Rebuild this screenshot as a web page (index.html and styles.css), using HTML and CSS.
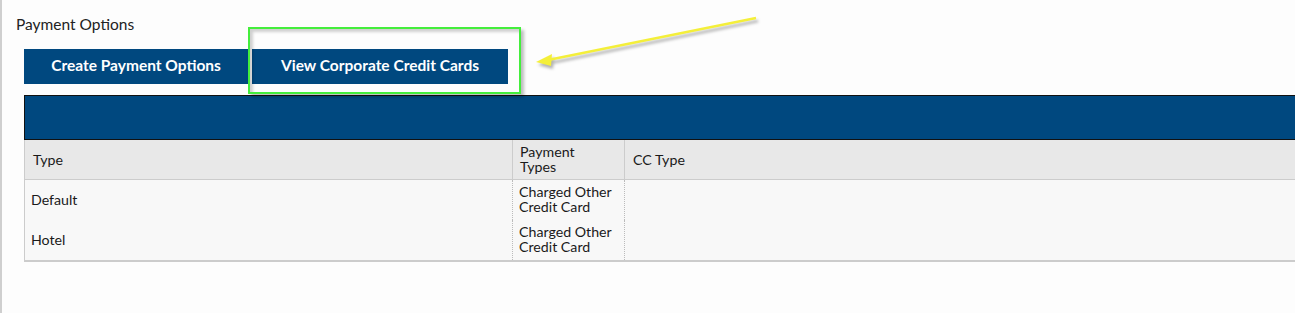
FILE: index.html
```html
<!DOCTYPE html>
<html>
<head>
  <title>Payment Options</title>
  <link rel="stylesheet" href="styles.css">
</head>
<body>
  <div class="page">
    <h2 class="title">Payment Options</h2>

    <div class="actions">
      <button class="btn">Create Payment Options</button>
      <button class="btn">View Corporate Credit Cards</button>
    </div>

    <div class="grid">
      <div class="grid-bar"></div>
      <div class="row head">
        <div class="cell">Type</div>
        <div class="cell">Payment<br>Types</div>
        <div class="cell">CC Type</div>
      </div>
      <div class="row">
        <div class="cell">Default</div>
        <div class="cell">Charged Other<br>Credit Card</div>
        <div class="cell"></div>
      </div>
      <div class="row">
        <div class="cell">Hotel</div>
        <div class="cell">Charged Other<br>Credit Card</div>
        <div class="cell"></div>
      </div>
    </div>

    <!-- annotation: highlight + arrow -->
    <div class="highlight"></div>
    <svg class="arrow" width="260" height="70" viewBox="0 0 260 70">
      <line x1="230" y1="12" x2="22" y2="54" stroke="#f4ef3a" stroke-width="2.4"/>
      <polygon points="10,56 26,48 25,60" fill="#f4ef3a"/>
    </svg>
  </div>
</body>
</html>
```

FILE: styles.css
```css
html, body {
  margin: 0;
  padding: 0;
  height: 100%;
  overflow: hidden;
}

body {
  background-color: #fdfdfd;
  font-family: Lato, "Open Sans", Arial, sans-serif;
  color: #1a1a1a;
}

.page {
  position: relative;
  min-height: 100%;
  border-left: 2px solid #cfcfcf;
  padding: 15px 0 0 14px;
  box-sizing: border-box;
}

.title {
  margin: 0;
  font-size: 15.5px;
  font-weight: normal;
  line-height: 18px;
  color: #222;
}

.actions {
  display: flex;
  gap: 4px;
  margin: 16px 0 0 8px;
}

.btn {
  height: 35px;
  padding: 0 0 3px;
  border: none;
  background-color: #00487f;
  color: #fff;
  font-family: Lato, Arial, sans-serif;
  font-weight: bold;
  font-size: 15.5px;
}

.btn:first-child {
  width: 224px;
}

.btn:last-child {
  width: 256px;
}

.grid {
  width: 1300px;
  margin: 11px 0 0 8px;
  font-size: 14.2px;
  line-height: 15px;
}

.grid-bar {
  height: 43px;
  background-color: #00487f;
  border: 1px solid #111;
}

.row {
  display: grid;
  grid-template-columns: 487px 112px 1fr;
  border-left: 1px solid #ccc;
  background-color: #f8f8f8;
}

.row .cell {
  display: flex;
  align-items: center;
  height: 40px;
  padding: 0 6px 2px;
  box-sizing: border-box;
}

.row .cell + .cell {
  border-left: 1px dotted #bbb;
}

.row:last-child {
  border-bottom: 2px solid #ccc;
}

.row.head {
  background-color: #e8e8e8;
  border-bottom: 1px solid #ccc;
}

.row.head .cell {
  height: 39px;
  padding: 0 8px 1px;
}

.row.head .cell + .cell {
  border-left: 1px solid #ccc;
  padding-left: 7px;
}

.row.head .cell:last-child {
  padding-left: 8px;
}

.highlight {
  position: absolute;
  left: 246px;
  top: 27px;
  width: 269px;
  height: 63px;
  border: 2px solid #44ee3c;
  box-shadow: 3px 3px 3px rgba(0, 0, 0, 0.25), inset 3px 3px 3px rgba(0, 0, 0, 0.18);
}

.arrow {
  position: absolute;
  left: 524px;
  top: 6px;
  filter: drop-shadow(2px 3px 1.5px rgba(0, 0, 0, 0.3));
}
```
